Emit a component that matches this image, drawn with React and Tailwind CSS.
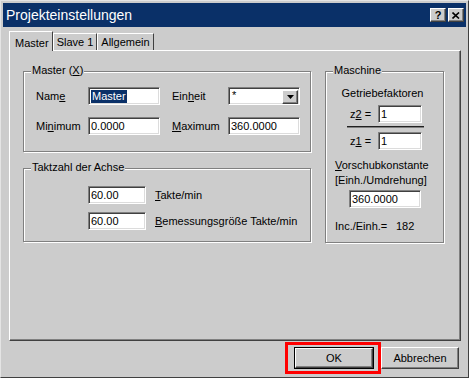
import React from 'react';

const sunken =
  "bg-white border-t border-l border-t-[#808080] border-l-[#808080] border-r border-b border-r-white border-b-white shadow-[inset_1px_1px_0_#404040,inset_-1px_-1px_0_#dcdcdc]";
const raised =
  "bg-[#cccccc] border-t border-l border-t-white border-l-white border-r border-b border-r-[#404040] border-b-[#404040] shadow-[inset_-1px_-1px_0_#808080]";
const etched =
  "relative border border-[#808080] shadow-[inset_1px_1px_0_#ffffff,1px_1px_0_#ffffff]";

const Legend = ({ children }) => (
  <span className="absolute left-[7px] -top-[8px] bg-[#cccccc] px-[1px] leading-[13px]">
    {children}
  </span>
);

const Input = ({ value, className }) => (
  <div className={`${sunken} h-[18px] flex items-center pl-[2px] ${className}`}>
    {value}
  </div>
);

const App = () => {
  return (
    <div className="w-[469px] h-[378px] bg-[#cccccc] border border-t-[#e4e4e4] border-l-[#e4e4e4] border-r-[#404040] border-b-[#404040] p-[2px] font-['Liberation_Sans',Arial,sans-serif] text-[11px] text-black leading-[13px] overflow-hidden">
      {/* Title bar */}
      <div className="h-[24px] bg-[#0a3068] flex items-center pl-[3px] pr-[2px]">
        <span className="flex-1 text-white text-[14px] leading-[16px]">Projekteinstellungen</span>
        <div className={`${raised} w-[16px] h-[14px] flex items-center justify-center font-bold text-[11px]`}>?</div>
        <div className={`${raised} ml-[2px] w-[16px] h-[14px] flex items-center justify-center`}>
          <svg width="8" height="7" viewBox="0 0 8 7">
            <path d="M0.5 0.5 L7 6.5 M7 0.5 L0.5 6.5" stroke="#000" strokeWidth="1.6" fill="none" />
          </svg>
        </div>
      </div>

      {/* Tabs */}
      <div className="mt-[4px] ml-[6px] h-[19px] flex items-end">
        <div className="relative z-10 h-[20px] w-[44px] -mb-[1px] bg-[#cccccc] border-t border-l border-white border-r border-r-[#404040] pl-[5px] pt-[5px]">
          Master
        </div>
        <div className="h-[17px] w-[44px] border-t border-l border-white border-r border-r-[#404040] flex justify-center pt-[2px]">
          Slave 1
        </div>
        <div className="h-[17px] w-[57px] border-t border-l border-white border-r border-r-[#404040] flex justify-center pt-[2px]">
          Allgemein
        </div>
      </div>

      {/* Tab panel */}
      <div className="ml-[6px] w-[452px] h-[291px] border-t border-l border-white border-r border-b border-r-[#404040] border-b-[#404040] shadow-[inset_-1px_-1px_0_#808080] pl-[13px] pt-[20px] flex">
        <div className="w-[288px] flex flex-col">
          {/* Master (X) */}
          <div className={`${etched} h-[81px] pl-[12px] pt-[15px]`}>
            <Legend>
              Master (<u>X</u>)
            </Legend>
            <div className="flex items-center">
              <span className="w-[52px]">
                Nam<u>e</u>
              </span>
              <div className={`${sunken} w-[72px] h-[18px] flex items-center pl-[2px]`}>
                <span className="bg-[#0a3068] text-white px-[1px]">Master</span>
              </div>
              <span className="ml-[12px] w-[56px]">
                Ein<u>h</u>eit
              </span>
              <div className={`${sunken} w-[72px] h-[18px] flex items-start pl-[3px] pt-[1px]`}>
                <span className="flex-1">*</span>
                <div className={`${raised} w-[16px] h-[14px] mt-[1px] mr-[1px] flex items-center justify-center`}>
                  <svg width="7" height="4" viewBox="0 0 7 4">
                    <path d="M0 0 H7 L3.5 4 Z" fill="#000" />
                  </svg>
                </div>
              </div>
            </div>
            <div className="flex items-center mt-[12px]">
              <span className="w-[52px]">
                Mi<u>n</u>imum
              </span>
              <Input value="0.0000" className="w-[72px]" />
              <span className="ml-[12px] w-[56px]">
                <u>M</u>aximum
              </span>
              <Input value="360.0000" className="w-[72px]" />
            </div>
          </div>

          {/* Taktzahl der Achse */}
          <div className={`${etched} mt-[16px] h-[74px] pl-[64px] pt-[17px]`}>
            <Legend>Taktzahl der Achse</Legend>
            <div className="flex items-center">
              <Input value="60.00" className="w-[58px]" />
              <span className="ml-[9px]">
                <u>T</u>akte/min
              </span>
            </div>
            <div className="flex items-center mt-[8px]">
              <Input value="60.00" className="w-[58px]" />
              <span className="ml-[9px]">
                <u>B</u>emessungsgröße Takte/min
              </span>
            </div>
          </div>
        </div>

        {/* Maschine */}
        <div className={`${etched} ml-[14px] w-[119px] h-[172px] pt-[15px]`}>
          <Legend>Maschine</Legend>
          <div className="text-center pr-[4px]">Getriebefaktoren</div>
          <div className="flex items-center mt-[5px] pl-[24px]">
            <span className="w-[28px]">
              z<u>2</u> =
            </span>
            <Input value="1" className="w-[44px]" />
          </div>
          <div className="ml-[21px] mt-[3px] w-[77px] h-[2px] bg-[#202020] border-b border-[#808080]" />
          <div className="flex items-center mt-[4px] pl-[24px]">
            <span className="w-[28px]">
              z<u>1</u> =
            </span>
            <Input value="1" className="w-[44px]" />
          </div>
          <div className="mt-[8px] pl-[9px] leading-[15px]">
            <div>
              <u>V</u>orschubkonstante
            </div>
            <div>[Einh./Umdrehung]</div>
          </div>
          <Input value="360.0000" className="mt-[2px] ml-[23px] w-[72px]" />
          <div className="mt-[12px] pl-[9px] flex">
            <span className="w-[61px]">Inc./Einh.=</span>
            <span>182</span>
          </div>
        </div>
      </div>

      {/* Buttons */}
      <div className="mt-[6px] flex justify-end pr-[7px]">
        <div className="relative">
          <div className="border border-black">
            <div className={`${raised} w-[78px] h-[20px] flex items-center justify-center`}>OK</div>
          </div>
          <div className="absolute -left-[9px] -top-[5px] -right-[7px] -bottom-[5px] border-[3px] border-[#ff0000]" />
        </div>
        <div className={`${raised} ml-[7px] w-[78px] h-[22px] flex items-center justify-center`}>Abbrechen</div>
      </div>
    </div>
  );
};

export default App;
